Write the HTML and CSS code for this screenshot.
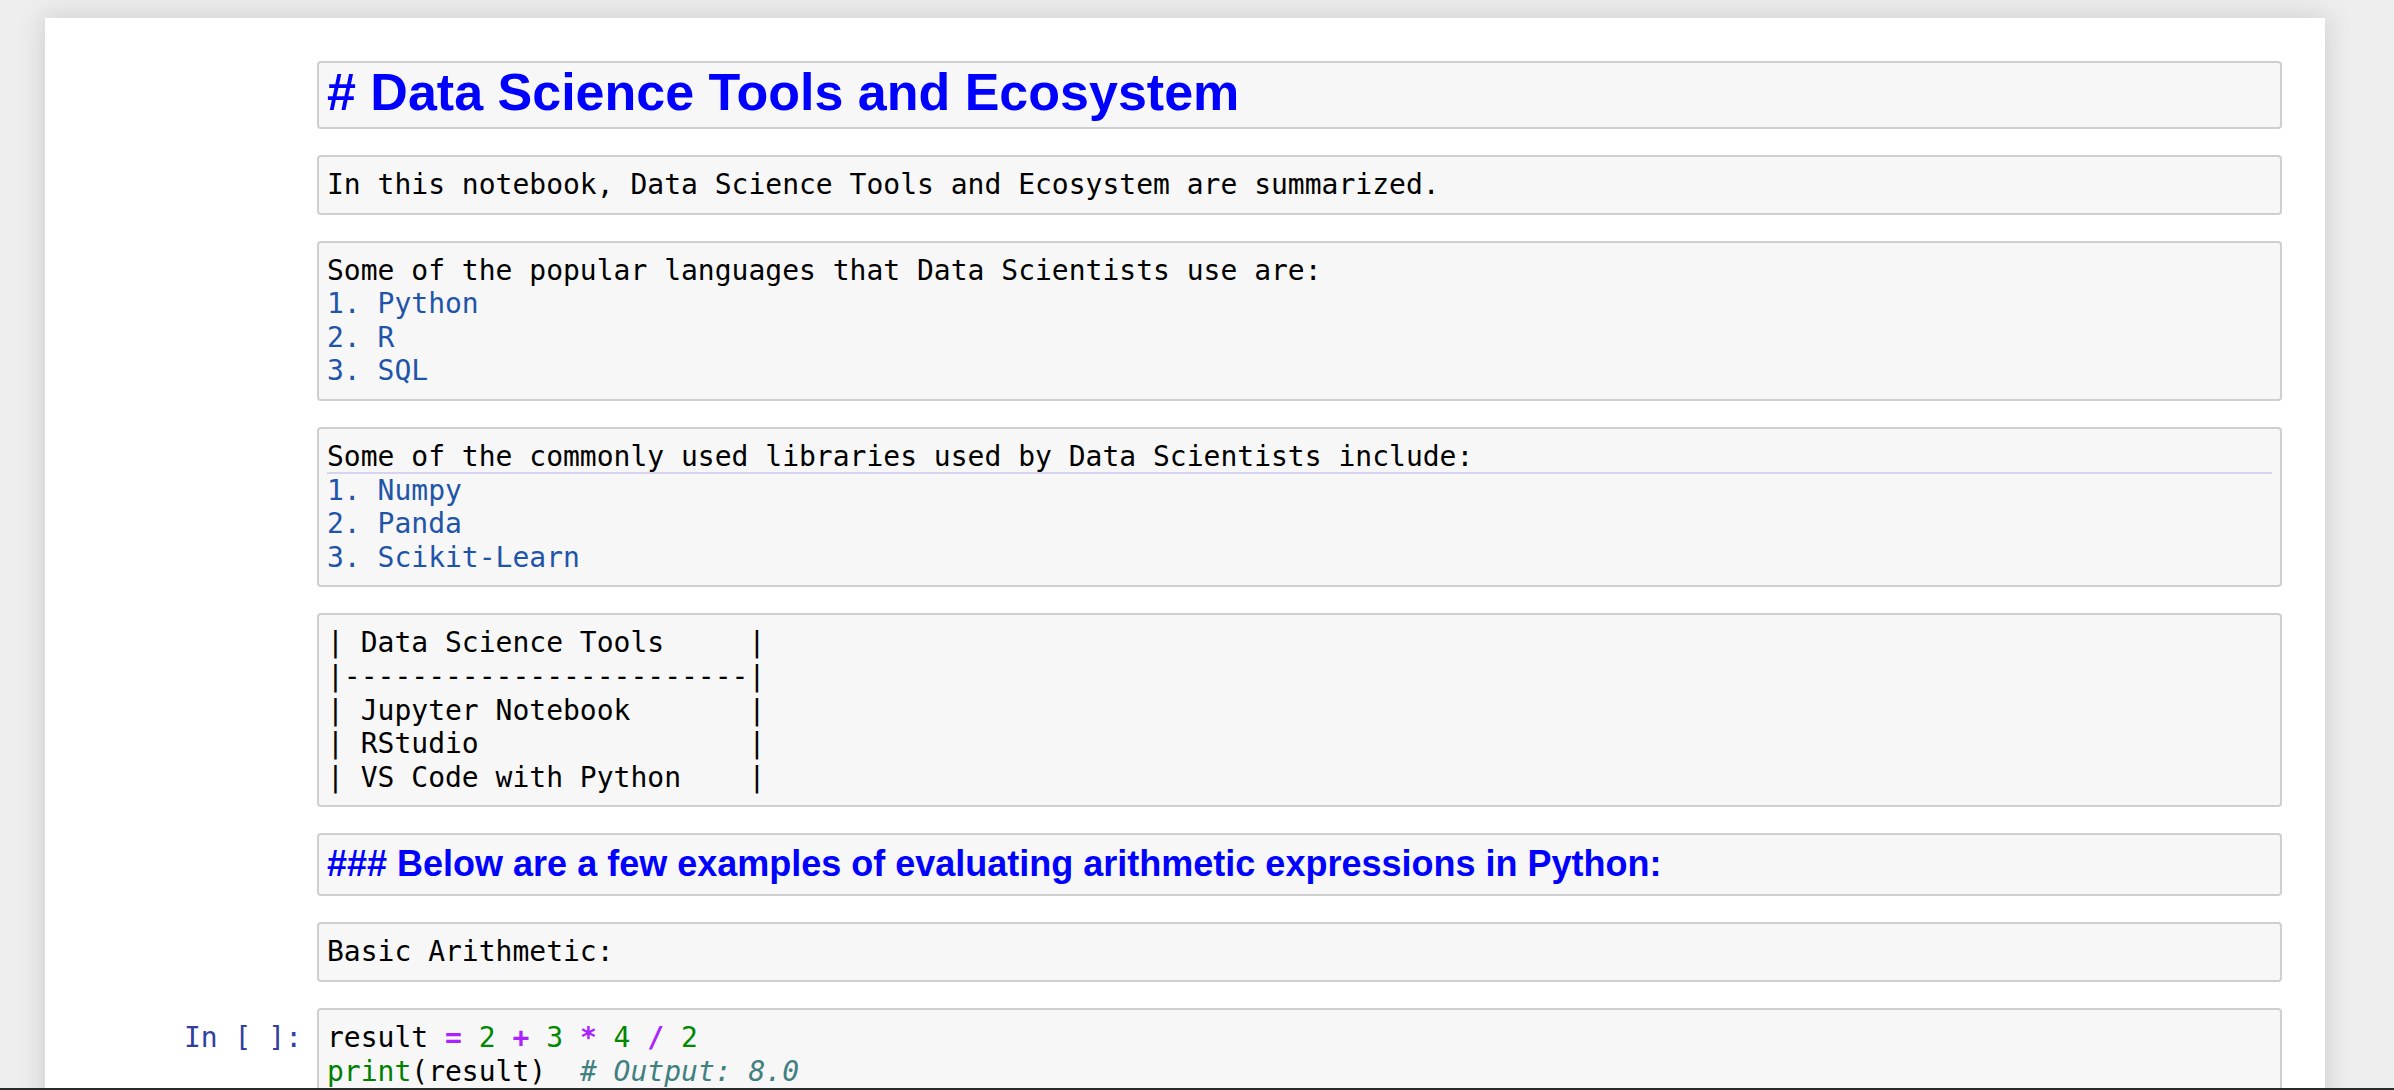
FILE: index.html
```html
<!DOCTYPE html>
<html lang="en">
<head>
<meta charset="utf-8">
<title>Data Science Tools and Ecosystem</title>
<link rel="stylesheet" href="styles.css">
</head>
<body>
<div class="viewport">
  <div class="notebook">
    <div class="cell">
      <div class="prompt"></div>
      <div class="input">
        <div class="line hdr h1-line">#&nbsp;Data Science Tools and Ecosystem</div>
      </div>
    </div>
    <div class="cell">
      <div class="prompt"></div>
      <div class="input">
        <div class="line">In this notebook, Data Science Tools and Ecosystem are summarized.</div>
      </div>
    </div>
    <div class="cell">
      <div class="prompt"></div>
      <div class="input">
        <div class="line">Some of the popular languages that Data Scientists use are:</div>
        <div class="line"><span class="list">1. Python</span></div>
        <div class="line"><span class="list">2. R</span></div>
        <div class="line"><span class="list">3. SQL</span></div>
      </div>
    </div>
    <div class="cell">
      <div class="prompt"></div>
      <div class="input">
        <div class="line marked">Some of the commonly used libraries used by Data Scientists include:</div>
        <div class="line"><span class="list">1. Numpy</span></div>
        <div class="line"><span class="list">2. Panda</span></div>
        <div class="line"><span class="list">3. Scikit-Learn</span></div>
      </div>
    </div>
    <div class="cell">
      <div class="prompt"></div>
      <div class="input">
        <div class="line">| Data Science Tools     |</div>
        <div class="line">|------------------------|</div>
        <div class="line">| Jupyter Notebook       |</div>
        <div class="line">| RStudio                |</div>
        <div class="line">| VS Code with Python    |</div>
      </div>
    </div>
    <div class="cell">
      <div class="prompt"></div>
      <div class="input">
        <div class="line hdr h3-line">###&nbsp;Below are a few examples of evaluating arithmetic expressions in Python:</div>
      </div>
    </div>
    <div class="cell">
      <div class="prompt"></div>
      <div class="input">
        <div class="line">Basic Arithmetic:</div>
      </div>
    </div>
    <div class="cell">
      <div class="prompt">In [ ]:</div>
      <div class="input">
        <div class="line">result <span class="op">=</span> <span class="num">2</span> <span class="op">+</span> <span class="num">3</span> <span class="op">*</span> <span class="num">4</span> <span class="op">/</span> <span class="num">2</span></div>
        <div class="line"><span class="builtin">print</span>(result)  <span class="comment"># Output: 8.0</span></div>
        <div class="line"> </div>
      </div>
    </div>
  </div>
</div>
<div class="bottom-edge"></div>
</body>
</html>
```

FILE: styles.css
```css
html, body {
  margin: 0;
  padding: 0;
}

body {
  height: 1090px;
  background: #eeeeee;
  display: flex;
  flex-direction: column;
  overflow: hidden;
  font-family: "DejaVu Sans Mono", "Liberation Mono", monospace;
  font-size: 28px;
  color: #000;
}

.viewport {
  flex: 1;
  overflow: hidden;
  padding-top: 18px;
}

.notebook {
  width: 2280px;
  margin-left: 45px;
  box-sizing: border-box;
  background: #ffffff;
  padding: 30px;
  box-shadow: 0 0 24px 2px rgba(87, 87, 87, 0.2);
  min-height: 1200px;
}

.cell {
  display: flex;
  padding: 13px;
}

.prompt {
  flex: none;
  width: 229px;
  box-sizing: border-box;
  padding: 13px 15px 0 0;
  text-align: right;
  color: #303f9f;
  line-height: 33.6px;
  white-space: pre;
}

.input {
  flex: 1;
  min-width: 0;
  background: #f7f7f7;
  border: 2px solid #cfcfcf;
  border-radius: 4px;
  padding: 11px 8px;
}

.line {
  white-space: pre;
  line-height: 33.6px;
  height: 33.6px;
}

.marked {
  box-shadow: inset 0 -2px 0 #d7d3ee;
}

.hdr {
  font-family: "Liberation Sans", Arial, sans-serif;
  font-weight: bold;
  color: #0000ff;
}

.h1-line {
  font-size: 52px;
  height: 36px;
  line-height: 36px;
  padding-bottom: 6px;
}

.h3-line {
  font-size: 36px;
  height: 31px;
  line-height: 31px;
  padding-top: 2px;
  padding-bottom: 4px;
}

.list {
  color: #1f55a8;
}

.op {
  color: #aa22ff;
  font-weight: bold;
}

.num {
  color: #008800;
}

.builtin {
  color: #008000;
}

.comment {
  color: #408080;
  font-style: italic;
}

.bottom-edge {
  flex: none;
  height: 2px;
  background: #2b2b2b;
}
```
